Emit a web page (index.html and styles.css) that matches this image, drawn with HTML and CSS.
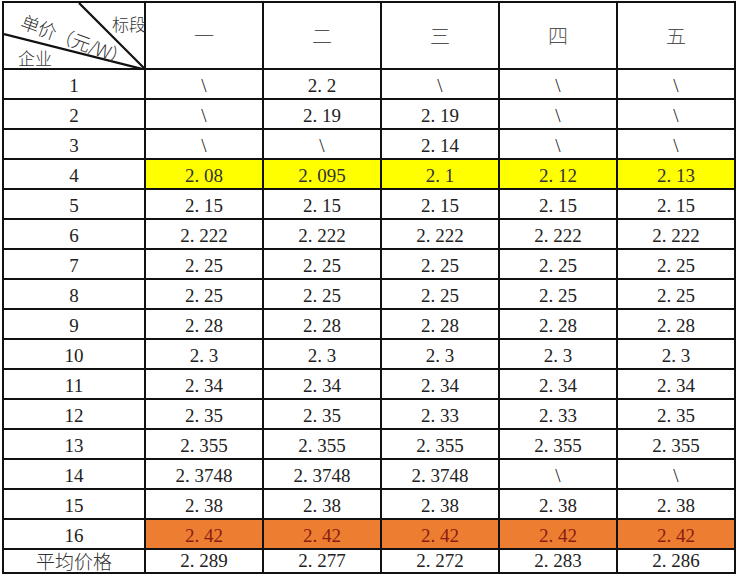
FILE: index.html
```html
<!DOCTYPE html>
<html lang="zh">
<head>
<meta charset="utf-8">
<title>单价表</title>
<link rel="stylesheet" href="styles.css">
</head>
<body>
<table class="grid">
  <colgroup>
    <col class="c0"><col class="cd"><col class="cd"><col class="cd"><col class="cd"><col class="cd">
  </colgroup>
  <tr class="head">
    <td class="corner">
      <svg class="diag" width="142" height="67" viewBox="0 0 142 67">
        <line x1="0" y1="31" x2="142" y2="67" stroke="#111" stroke-width="2.2"/>
        <line x1="75" y1="0" x2="142" y2="67" stroke="#111" stroke-width="2.2"/>
      </svg>
      <span class="lab lab-seg">标段</span>
      <span class="lab lab-price">单价（元/W）</span>
      <span class="lab lab-ent">企业</span>
    </td>
    <td class="zh">一</td><td class="zh">二</td><td class="zh">三</td><td class="zh">四</td><td class="zh">五</td>
  </tr>
  <tr><td>1</td><td>\</td><td>2<span class="d">.</span>2</td><td>\</td><td>\</td><td>\</td></tr>
  <tr><td>2</td><td>\</td><td>2<span class="d">.</span>19</td><td>2<span class="d">.</span>19</td><td>\</td><td>\</td></tr>
  <tr><td>3</td><td>\</td><td>\</td><td>2<span class="d">.</span>14</td><td>\</td><td>\</td></tr>
  <tr class="hl-y"><td>4</td><td class="y">2<span class="d">.</span>08</td><td class="y">2<span class="d">.</span>095</td><td class="y">2<span class="d">.</span>1</td><td class="y">2<span class="d">.</span>12</td><td class="y">2<span class="d">.</span>13</td></tr>
  <tr><td>5</td><td>2<span class="d">.</span>15</td><td>2<span class="d">.</span>15</td><td>2<span class="d">.</span>15</td><td>2<span class="d">.</span>15</td><td>2<span class="d">.</span>15</td></tr>
  <tr><td>6</td><td>2<span class="d">.</span>222</td><td>2<span class="d">.</span>222</td><td>2<span class="d">.</span>222</td><td>2<span class="d">.</span>222</td><td>2<span class="d">.</span>222</td></tr>
  <tr><td>7</td><td>2<span class="d">.</span>25</td><td>2<span class="d">.</span>25</td><td>2<span class="d">.</span>25</td><td>2<span class="d">.</span>25</td><td>2<span class="d">.</span>25</td></tr>
  <tr><td>8</td><td>2<span class="d">.</span>25</td><td>2<span class="d">.</span>25</td><td>2<span class="d">.</span>25</td><td>2<span class="d">.</span>25</td><td>2<span class="d">.</span>25</td></tr>
  <tr><td>9</td><td>2<span class="d">.</span>28</td><td>2<span class="d">.</span>28</td><td>2<span class="d">.</span>28</td><td>2<span class="d">.</span>28</td><td>2<span class="d">.</span>28</td></tr>
  <tr><td>10</td><td>2<span class="d">.</span>3</td><td>2<span class="d">.</span>3</td><td>2<span class="d">.</span>3</td><td>2<span class="d">.</span>3</td><td>2<span class="d">.</span>3</td></tr>
  <tr><td>11</td><td>2<span class="d">.</span>34</td><td>2<span class="d">.</span>34</td><td>2<span class="d">.</span>34</td><td>2<span class="d">.</span>34</td><td>2<span class="d">.</span>34</td></tr>
  <tr><td>12</td><td>2<span class="d">.</span>35</td><td>2<span class="d">.</span>35</td><td>2<span class="d">.</span>33</td><td>2<span class="d">.</span>33</td><td>2<span class="d">.</span>35</td></tr>
  <tr><td>13</td><td>2<span class="d">.</span>355</td><td>2<span class="d">.</span>355</td><td>2<span class="d">.</span>355</td><td>2<span class="d">.</span>355</td><td>2<span class="d">.</span>355</td></tr>
  <tr><td>14</td><td>2<span class="d">.</span>3748</td><td>2<span class="d">.</span>3748</td><td>2<span class="d">.</span>3748</td><td>\</td><td>\</td></tr>
  <tr><td>15</td><td>2<span class="d">.</span>38</td><td>2<span class="d">.</span>38</td><td>2<span class="d">.</span>38</td><td>2<span class="d">.</span>38</td><td>2<span class="d">.</span>38</td></tr>
  <tr><td>16</td><td class="o">2<span class="d">.</span>42</td><td class="o">2<span class="d">.</span>42</td><td class="o">2<span class="d">.</span>42</td><td class="o">2<span class="d">.</span>42</td><td class="o">2<span class="d">.</span>42</td></tr>
  <tr class="avg"><td class="zh">平均价格</td><td>2<span class="d">.</span>289</td><td>2<span class="d">.</span>277</td><td>2<span class="d">.</span>272</td><td>2<span class="d">.</span>283</td><td>2<span class="d">.</span>286</td></tr>
</table>
</body>
</html>
```
FILE: styles.css
```css
html, body {
  margin: 0;
  padding: 0;
  background: #fff;
}
body {
  padding: 1px 0 0 2px;
}
.grid {
  border-collapse: collapse;
  table-layout: fixed;
  width: 732px;
  font-family: "Liberation Serif", "Noto Sans CJK SC", serif;
  font-size: 19px;
  color: #222;
}
.c0 { width: 142px; }
.cd { width: 118px; }
.grid td {
  border: 2px solid #111;
  height: 25px;
  padding: 3px 0 0 0;
  text-align: center;
  vertical-align: middle;
  line-height: 20px;
}
.grid .head td {
  height: 65px;
  padding-top: 0;
}
.grid .avg td {
  height: 22px;
  padding-top: 0;
}
.d {
  display: inline-block;
  width: 0.5em;
  text-align: left;
}
.zh {
  font-family: "Noto Sans CJK SC", sans-serif;
  font-weight: 300;
}
.grid .head .zh {
  color: #555;
  font-size: 20px;
}
.avg .zh {
  color: #333;
  font-size: 19px;
}
.y {
  background: #ffff00;
  color: #333;
}
.o {
  background: #ed7d31;
  color: #8a1c12;
}
.corner {
  position: relative;
}
.diag {
  position: absolute;
  left: 0;
  top: 0;
}
.lab {
  position: absolute;
  font-family: "Noto Sans CJK SC", sans-serif;
  font-weight: 300;
  font-size: 17px;
  line-height: 17px;
  color: #333;
  white-space: nowrap;
}
.lab-seg {
  right: -2px;
  top: 12px;
}
.lab-ent {
  left: 14px;
  top: 46px;
}
.lab-price {
  left: 18px;
  top: 9px;
  font-size: 18.5px;
  letter-spacing: -0.5px;
  transform: rotate(20deg);
  transform-origin: 0 50%;
}
```
